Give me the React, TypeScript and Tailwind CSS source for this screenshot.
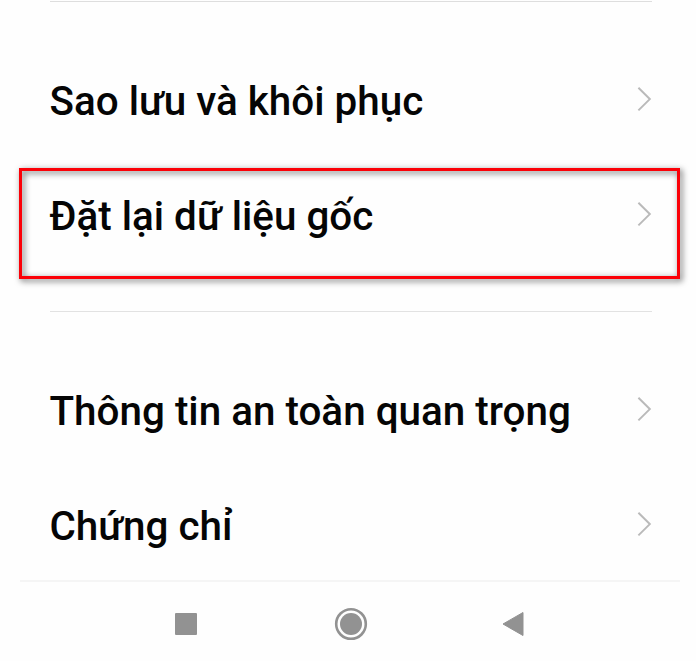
import React from "react";

function Chevron() {
  return (
    <svg className="block h-[26px] w-[16px]" viewBox="0 0 16 26" fill="none">
      <path d="M1.4 0.8L12.8 12.1L1.4 23.4" stroke="#bababa" strokeWidth="2" />
    </svg>
  );
}

function Row({ label, highlighted = false }: { label: string; highlighted?: boolean }) {
  return (
    <div className="relative flex h-[115px] shrink-0 items-center justify-between pl-[49.5px] pr-[43px]">
      <span className="whitespace-nowrap pt-[4px] font-[Roboto,sans-serif] text-[40.4px] leading-[48px] font-medium text-[#050505]">
        {label}
      </span>
      <Chevron />
      {highlighted && (
        <div className="pointer-events-none absolute top-[11px] left-[19px] h-[111px] w-[661px] border-[3px] border-[#fb0007] drop-shadow-[2px_2px_3px_rgba(0,0,0,0.65)]" />
      )}
    </div>
  );
}

export default function App() {
  return (
    <main className="flex h-[661px] w-[696px] flex-col overflow-hidden bg-[#fefefe]">
      <div className="mt-px ml-[50px] h-px w-[602px] shrink-0 bg-[#dedede]" />
      <section className="flex flex-col pt-[40px]">
        <Row label="Sao lưu và khôi phục" />
        <Row label="Đặt lại dữ liệu gốc" highlighted />
      </section>
      <div className="mt-[39px] ml-[50px] h-px w-[602px] shrink-0 bg-[#e2e2e2]" />
      <section className="flex flex-col pt-[40px]">
        <Row label="Thông tin an toàn quan trọng" />
        <Row label="Chứng chỉ" />
      </section>
      <nav className="-mt-[2px] ml-[20px] flex h-[80px] w-[660px] shrink-0 items-center border-t-2 border-[#f5f5f5] pt-[5px]">
        <div className="ml-[155px] size-[22px] rounded-[1px] bg-[#929292]" />
        <svg className="ml-[137px] block size-[34px]" viewBox="0 0 34 34">
          <circle cx="17" cy="17" r="14.8" fill="none" stroke="#929292" strokeWidth="2.6" />
          <circle cx="17" cy="17" r="11" fill="#929292" />
        </svg>
        <svg className="ml-[134px] block h-[26px] w-[22px]" viewBox="0 0 22 26">
          <path d="M1 13L21 1.5V24.5Z" fill="#929292" stroke="#929292" strokeWidth="1" strokeLinejoin="round" />
        </svg>
      </nav>
    </main>
  );
}
